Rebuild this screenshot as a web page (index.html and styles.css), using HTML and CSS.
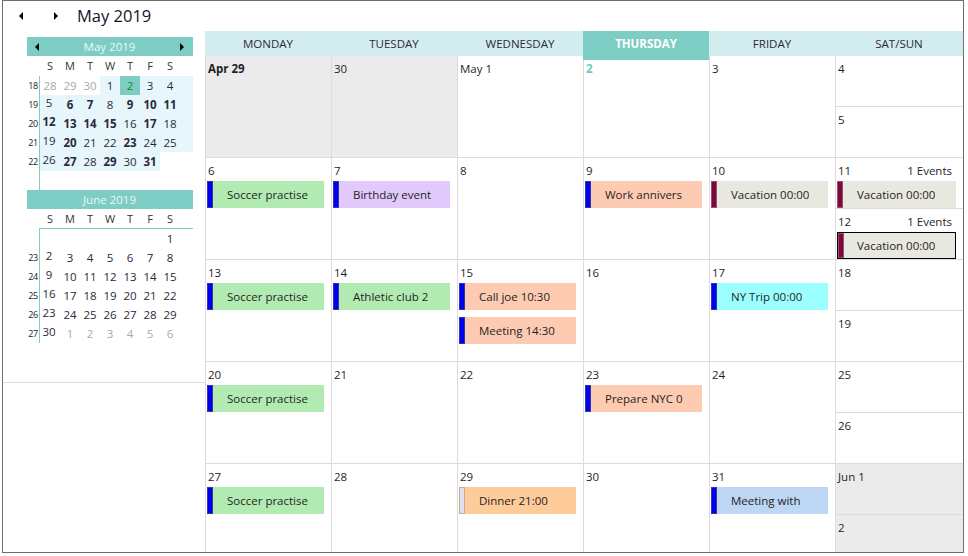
FILE: index.html
```html
<!DOCTYPE html>
<html lang="en">
<head>
<meta charset="utf-8">
<title>Calendar - May 2019</title>
<link rel="stylesheet" href="styles.css">
</head>
<body>
<div class="app">
  <div class="toolbar">
    <span class="nav prev"><svg width="4" height="8" viewBox="0 0 4 8"><path d="M4 0V8L0 4Z"/></svg></span>
    <span class="nav next"><svg width="4" height="8" viewBox="0 0 4 8"><path d="M0 0V8L4 4Z"/></svg></span>
    <span class="title">May 2019</span>
  </div>
  <div class="main">
    <aside class="side">
      <div class="side-cal">
        <div class="mini">
          <div class="mini-head">
            <svg class="mini-arrow" width="4" height="8" viewBox="0 0 4 8"><path d="M4 0V8L0 4Z"/></svg>
            <span class="mini-title">May 2019</span>
            <svg class="mini-arrow" width="4" height="8" viewBox="0 0 4 8"><path d="M0 0V8L4 4Z"/></svg>
          </div>
          <div class="mini-dow"><span></span><span>S</span><span>M</span><span>T</span><span>W</span><span>T</span><span>F</span><span>S</span></div>
          <div class="mini-body">
            <div class="weeknums"><span>18</span><span>19</span><span>20</span><span>21</span><span>22</span><span></span></div>
            <div class="mini-grid">
              <span class="d other">28</span><span class="d other">29</span><span class="d other">30</span><span class="d cur">1</span><span class="d cur today">2</span><span class="d cur">3</span><span class="d cur sat">4</span>
              <span class="d cur sun">5</span><span class="d cur b">6</span><span class="d cur b">7</span><span class="d cur">8</span><span class="d cur b">9</span><span class="d cur b">10</span><span class="d cur b sat">11</span>
              <span class="d cur b sun">12</span><span class="d cur b">13</span><span class="d cur b">14</span><span class="d cur b">15</span><span class="d cur">16</span><span class="d cur b">17</span><span class="d cur sat">18</span>
              <span class="d cur sun">19</span><span class="d cur b">20</span><span class="d cur">21</span><span class="d cur">22</span><span class="d cur b">23</span><span class="d cur">24</span><span class="d cur sat">25</span>
              <span class="d cur sun">26</span><span class="d cur b">27</span><span class="d cur">28</span><span class="d cur b">29</span><span class="d cur">30</span><span class="d cur b">31</span><span class="d sat"></span>
              <span class="d"></span><span class="d"></span><span class="d"></span><span class="d"></span><span class="d"></span><span class="d"></span><span class="d sat"></span>
            </div>
          </div>
        </div>
        <div class="mini">
          <div class="mini-head">
            <span class="mini-title">June 2019</span>
          </div>
          <div class="mini-dow"><span></span><span>S</span><span>M</span><span>T</span><span>W</span><span>T</span><span>F</span><span>S</span></div>
          <div class="mini-body lined">
            <div class="weeknums"><span></span><span>23</span><span>24</span><span>25</span><span>26</span><span>27</span></div>
            <div class="mini-grid">
              <span class="d"></span><span class="d"></span><span class="d"></span><span class="d"></span><span class="d"></span><span class="d"></span><span class="d sat">1</span>
              <span class="d sun">2</span><span class="d">3</span><span class="d">4</span><span class="d">5</span><span class="d">6</span><span class="d">7</span><span class="d sat">8</span>
              <span class="d sun">9</span><span class="d">10</span><span class="d">11</span><span class="d">12</span><span class="d">13</span><span class="d">14</span><span class="d sat">15</span>
              <span class="d sun">16</span><span class="d">17</span><span class="d">18</span><span class="d">19</span><span class="d">20</span><span class="d">21</span><span class="d sat">22</span>
              <span class="d sun">23</span><span class="d">24</span><span class="d">25</span><span class="d">26</span><span class="d">27</span><span class="d">28</span><span class="d sat">29</span>
              <span class="d sun">30</span><span class="d other">1</span><span class="d other">2</span><span class="d other">3</span><span class="d other">4</span><span class="d other">5</span><span class="d other sat">6</span>
            </div>
          </div>
        </div>
      </div>
    </aside>

    <section class="month">
      <div class="dow-row">
        <div class="dow">MONDAY</div>
        <div class="dow">TUESDAY</div>
        <div class="dow">WEDNESDAY</div>
        <div class="dow dow-today">THURSDAY</div>
        <div class="dow">FRIDAY</div>
        <div class="dow">SAT/SUN</div>
      </div>
      <div class="weeks">
        <!-- week of Apr 29 -->
        <div class="week">
          <div class="cell off"><div class="date bold">Apr 29</div></div>
          <div class="cell off"><div class="date">30</div></div>
          <div class="cell"><div class="date">May 1</div></div>
          <div class="cell"><div class="date today-date">2</div></div>
          <div class="cell"><div class="date">3</div></div>
          <div class="cell weekend">
            <div class="half first"><div class="date">4</div></div>
            <div class="half"><div class="date">5</div></div>
          </div>
        </div>
        <!-- week of May 6 -->
        <div class="week">
          <div class="cell"><div class="date">6</div>
            <div class="event ev-green"><span class="bar"></span><span class="ev-text">Soccer practise</span></div>
          </div>
          <div class="cell"><div class="date">7</div>
            <div class="event ev-lilac"><span class="bar"></span><span class="ev-text">Birthday event</span></div>
          </div>
          <div class="cell"><div class="date">8</div></div>
          <div class="cell"><div class="date">9</div>
            <div class="event ev-peach"><span class="bar"></span><span class="ev-text">Work annivers</span></div>
          </div>
          <div class="cell"><div class="date">10</div>
            <div class="event ev-stone"><span class="bar bar-maroon"></span><span class="ev-text">Vacation 00:00</span></div>
          </div>
          <div class="cell weekend">
            <div class="half first">
              <div class="date split"><span>11</span><span>1 Events</span></div>
              <div class="event ev-stone"><span class="bar bar-maroon"></span><span class="ev-text">Vacation 00:00</span></div>
            </div>
            <div class="half">
              <div class="date split"><span>12</span><span>1 Events</span></div>
              <div class="event ev-stone selected"><span class="bar bar-maroon"></span><span class="ev-text">Vacation 00:00</span></div>
            </div>
          </div>
        </div>
        <!-- week of May 13 -->
        <div class="week">
          <div class="cell"><div class="date">13</div>
            <div class="event ev-green"><span class="bar"></span><span class="ev-text">Soccer practise</span></div>
          </div>
          <div class="cell"><div class="date">14</div>
            <div class="event ev-green"><span class="bar"></span><span class="ev-text">Athletic club 2</span></div>
          </div>
          <div class="cell"><div class="date">15</div>
            <div class="event ev-peach"><span class="bar"></span><span class="ev-text">Call joe 10:30</span></div>
            <div class="event ev-peach next-ev"><span class="bar"></span><span class="ev-text">Meeting 14:30</span></div>
          </div>
          <div class="cell"><div class="date">16</div></div>
          <div class="cell"><div class="date">17</div>
            <div class="event ev-cyan"><span class="bar"></span><span class="ev-text">NY Trip 00:00</span></div>
          </div>
          <div class="cell weekend">
            <div class="half first"><div class="date">18</div></div>
            <div class="half"><div class="date">19</div></div>
          </div>
        </div>
        <!-- week of May 20 -->
        <div class="week">
          <div class="cell"><div class="date">20</div>
            <div class="event ev-green"><span class="bar"></span><span class="ev-text">Soccer practise</span></div>
          </div>
          <div class="cell"><div class="date">21</div></div>
          <div class="cell"><div class="date">22</div></div>
          <div class="cell"><div class="date">23</div>
            <div class="event ev-peach"><span class="bar"></span><span class="ev-text">Prepare NYC 0</span></div>
          </div>
          <div class="cell"><div class="date">24</div></div>
          <div class="cell weekend">
            <div class="half first"><div class="date">25</div></div>
            <div class="half"><div class="date">26</div></div>
          </div>
        </div>
        <!-- week of May 27 -->
        <div class="week">
          <div class="cell"><div class="date">27</div>
            <div class="event ev-green"><span class="bar"></span><span class="ev-text">Soccer practise</span></div>
          </div>
          <div class="cell"><div class="date">28</div></div>
          <div class="cell"><div class="date">29</div>
            <div class="event ev-orange"><span class="bar bar-pale"></span><span class="ev-text">Dinner 21:00</span></div>
          </div>
          <div class="cell"><div class="date">30</div></div>
          <div class="cell"><div class="date">31</div>
            <div class="event ev-blue"><span class="bar"></span><span class="ev-text">Meeting with</span></div>
          </div>
          <div class="cell weekend off">
            <div class="half first"><div class="date">Jun 1</div></div>
            <div class="half"><div class="date">2</div></div>
          </div>
        </div>
      </div>
    </section>
  </div>
</div>
</body>
</html>
```

FILE: styles.css
```css
* { box-sizing: border-box; }

html, body {
  margin: 0;
  padding: 0;
  background: #ffffff;
}

body {
  width: 968px;
  height: 556px;
  overflow: hidden;
  font-family: "Open Sans", "Noto Sans", sans-serif;
  font-size: 11.5px;
  color: #1f1f1f;
}

/* window frame */
.app {
  margin-left: 2px;
  width: 962px;
  height: 553px;
  border: 1px solid #6e6e6e;
  display: flex;
  flex-direction: column;
}

/* top navigation bar */
.toolbar {
  height: 30px;
  flex: 0 0 30px;
  display: flex;
  align-items: center;
}

.nav {
  display: flex;
  fill: #000;
}
.nav.prev { margin-left: 16px; }
.nav.next { margin-left: 31px; }

.title {
  margin-left: 19px;
  font-size: 16.5px;
  color: #141428;
  line-height: 20px;
}

.main {
  flex: 1;
  display: flex;
  min-height: 0;
}

/* left side: the two small month pickers */
.side {
  width: 202px;
  flex: 0 0 202px;
}

.side-cal {
  height: 352px;
  border-bottom: 1px solid #dcdcdc;
  padding: 6px 0 0 24px;
}

.mini {
  width: 166px;
}

.mini-head {
  height: 19px;
  background: #7ecdc4;
  display: flex;
  align-items: center;
  padding: 0 9px 0 8px;
}

.mini-arrow { fill: #000; flex: 0 0 4px; }

.mini-title {
  flex: 1;
  text-align: center;
  color: #e9f8f6;
  font-size: 11.5px;
  line-height: 19px;
}

.mini-dow {
  display: grid;
  grid-template-columns: 13px repeat(6, 20px) 33px;
  height: 20px;
  line-height: 19px;
  font-size: 11px;
  color: #333;
}
.mini-dow span { text-align: center; }
.mini-dow span:last-child { padding-right: 13px; }

.mini-body {
  display: grid;
  grid-template-columns: 12px 1fr;
}

.weeknums {
  display: grid;
  grid-template-rows: repeat(6, 19px);
  font-size: 9px;
  color: #222;
  letter-spacing: -0.3px;
}
.weeknums span {
  text-align: center;
  line-height: 19px;
}

.mini-grid {
  display: grid;
  grid-template-columns: repeat(6, 20px) 33px;
  grid-template-rows: repeat(6, 19px);
  border-left: 1px solid #7ecdc4;
}

/* June picker draws a rule under the weekday letters */
.mini-body.lined { margin-top: -1px; }
.mini-body.lined .mini-grid { border-top: 1px solid #7ecdc4; }
.mini-body.lined .weeknums { padding-top: 1px; }

.d {
  text-align: center;
  line-height: 19px;
  font-size: 11.5px;
  color: #2a2a3a;
}
.d.cur { background: #e6f6fb; }
.d.other { color: #a9a9a9; }
.d.b { font-weight: 700; }
.d.today { background: #7ecdc4; color: #178a17; }
.d.sat { padding-right: 13px; }
.d.sun { line-height: 15px; padding-right: 2px; }

/* month grid */
.month {
  flex: 1;
  display: flex;
  flex-direction: column;
  min-width: 0;
}

.dow-row {
  height: 25px;
  flex: 0 0 25px;
  display: grid;
  grid-template-columns: repeat(5, 126px) 1fr;
  background: #d3ecf0;
}

.dow {
  text-align: center;
  line-height: 25px;
  color: #2a2a3a;
}

.dow-today {
  position: relative;
  z-index: 2;
  margin-bottom: -4px;
  background: #7ecdc4;
  color: #ffffff;
  font-weight: 700;
}

.weeks {
  flex: 1;
  display: grid;
  grid-template-rows: repeat(4, 102px) 1fr;
  min-height: 0;
}

.week {
  display: grid;
  grid-template-columns: repeat(5, 126px) 1fr;
  border-bottom: 1px solid #dcdcdc;
  min-height: 0;
}
.week:last-child { border-bottom: 0; }

.cell {
  border-left: 1px solid #dcdcdc;
  min-width: 0;
  display: flex;
  flex-direction: column;
}
.cell.off { background: #ebebeb; }

.weekend .half {
  flex: 1;
  min-height: 0;
}
.weekend .half.first {
  flex: 0 0 51px;
  border-bottom: 1px solid #dcdcdc;
}

.date {
  height: 21px;
  padding: 5px 0 0 2px;
  line-height: 16px;
  white-space: nowrap;
}
.date.bold { font-weight: 700; }
.date.today-date { color: #6ccabe; font-weight: 700; }
.date.split {
  display: flex;
  justify-content: space-between;
  padding-right: 11px;
}

/* appointment chips */
.event {
  margin: 2px 0 0 1px;
  width: calc(100% - 8px);
  height: 27px;
  display: flex;
  overflow: hidden;
  position: relative;
}
.event.next-ev { margin-top: 7px; }
.event.selected { border: 1px solid #000; }

.bar {
  flex: 0 0 6px;
  height: 100%;
  background: #0000ee;
  border: 1px solid #3434a8;
}
.bar-maroon { background: #7b0a3c; border-color: #9c4c6c; }
.bar-pale { background: #dfe1f2; border-color: #cfa88a; }

.ev-text {
  padding-left: 14px;
  line-height: 27px;
  white-space: nowrap;
  overflow: hidden;
  color: #1f1f1f;
}
.selected .ev-text { line-height: 25px; padding-left: 13px; }

.ev-green { background: #b1ebb1; }
.ev-lilac { background: #e1c9fc; }
.ev-peach { background: #fdcbb2; }
.ev-stone { background: #e8e8e0; }
.ev-cyan { background: #9bffff; }
.ev-orange { background: #fecb9a; }
.ev-blue { background: #bcd6f4; }
```
